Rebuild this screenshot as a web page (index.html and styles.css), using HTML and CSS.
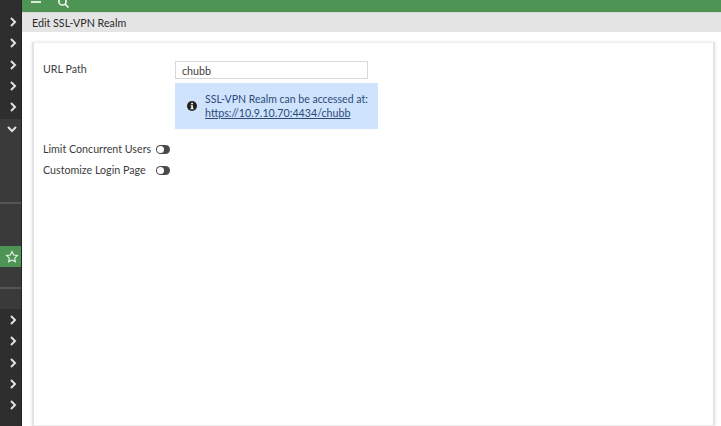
FILE: index.html
```html
<!DOCTYPE html>
<html lang="en">
<head>
<meta charset="utf-8">
<title>Edit SSL-VPN Realm</title>
<link rel="stylesheet" href="styles.css">
</head>
<body>
<div class="app">
  <nav class="side">
    <div class="nav-top">
      <svg class="chev" viewBox="0 0 8 10"><path d="M2 1l4 4-4 4"/></svg>
      <svg class="chev" viewBox="0 0 8 10"><path d="M2 1l4 4-4 4"/></svg>
      <svg class="chev" viewBox="0 0 8 10"><path d="M2 1l4 4-4 4"/></svg>
      <svg class="chev" viewBox="0 0 8 10"><path d="M2 1l4 4-4 4"/></svg>
      <svg class="chev" viewBox="0 0 8 10"><path d="M2 1l4 4-4 4"/></svg>
    </div>
    <div class="nav-open">
      <svg class="chev-down" viewBox="0 0 10 8"><path d="M1 2l4 4 4-4"/></svg>
      <div class="sep sep-a"></div>
      <div class="fav">
        <svg class="star" viewBox="0 0 14 14"><path d="M7 1.6l1.65 3.4 3.75.5-2.72 2.6.66 3.7L7 10l-3.34 1.8.66-3.7L1.6 5.5l3.75-.5z"/></svg>
      </div>
      <div class="sep sep-b"></div>
    </div>
    <div class="nav-bottom">
      <svg class="chev" viewBox="0 0 8 10"><path d="M2 1l4 4-4 4"/></svg>
      <svg class="chev" viewBox="0 0 8 10"><path d="M2 1l4 4-4 4"/></svg>
      <svg class="chev" viewBox="0 0 8 10"><path d="M2 1l4 4-4 4"/></svg>
      <div class="alert-row">
        <span class="red"></span>
        <svg class="chev" viewBox="0 0 8 10"><path d="M2 1l4 4-4 4"/></svg>
      </div>
      <svg class="chev" viewBox="0 0 8 10"><path d="M2 1l4 4-4 4"/></svg>
    </div>
  </nav>
  <main class="main">
    <header class="topbar">
      <svg class="menu" viewBox="0 0 10 6"><path d="M0 2h10"/></svg>
      <svg class="search" viewBox="0 0 11 9"><circle cx="4.5" cy="1.5" r="3.6"/><path d="M7 4l3.5 3.5"/></svg>
    </header>
    <div class="title">Edit SSL-VPN Realm</div>
    <section class="card">
      <div class="row-url">
        <label class="lbl lbl-url">URL Path</label>
        <div class="field">
          <input class="input" type="text" value="chubb">
          <div class="info">
            <svg class="info-icon" viewBox="0 0 10 10"><circle cx="5" cy="5" r="5" fill="#222"/><rect x="4.2" y="1.7" width="1.7" height="1.6" fill="#fff"/><path d="M3.7 4.2h2.2v3h.7v1H3.5v-1h.8v-2h-.6z" fill="#fff"/></svg>
            <div class="info-text">
              <div>SSL-VPN Realm can be accessed at:</div>
              <a class="link" href="#">https://10.9.10.70:4434/chubb</a>
            </div>
          </div>
        </div>
      </div>
      <div class="row-toggle">
        <span class="lbl lbl-toggle">Limit Concurrent Users</span>
        <span class="toggle"></span>
      </div>
      <div class="row-toggle row-login">
        <span class="lbl lbl-toggle">Customize Login Page</span>
        <span class="toggle"></span>
      </div>
    </section>
  </main>
</div>
</body>
</html>
```

FILE: styles.css
```css
* { box-sizing: border-box; }
html, body { margin: 0; height: 100%; overflow: hidden; background: #fff; }
body { font-family: Lato, "Liberation Sans", sans-serif; font-size: 10.7px; color: #3c3c3c; }

.app { display: flex; height: 426px; }

.side {
  width: 22px;
  flex: none;
  display: flex;
  flex-direction: column;
  background: #2e2e2e;
  border-right: 1px solid #242424;
}
.nav-top { display: flex; flex-direction: column; align-items: flex-end; height: 119px; padding: 17px 4px 0 0; gap: 11.25px; }
.nav-open { height: 190px; background: #3a3a3a; }
.nav-bottom { display: flex; flex-direction: column; align-items: flex-end; padding: 6px 4px 0 0; gap: 11.25px; }

.chev { width: 8px; height: 10px; flex: none; display: block; }
.chev path, .chev-down path { fill: none; stroke: #e2e2e2; stroke-width: 2; }
.chev-down { display: block; width: 10px; height: 8px; margin: 6px 0 0 7px; }

.sep { height: 2px; background: #555; }
.sep-a { margin-top: 69px; }
.sep-b { margin-top: 20px; }

.fav { height: 21px; margin-top: 42px; background: #4e9455; display: flex; align-items: center; justify-content: flex-end; padding-right: 2px; }
.star { width: 14px; height: 14px; }
.star path { fill: none; stroke: #eef5ee; stroke-width: 1.1; }

.alert-row { position: relative; }
.red { position: absolute; left: -18px; top: 1px; width: 3px; height: 8px; border-radius: 0 2px 2px 0; background: #e0281e; }

.main { flex: 1; display: flex; flex-direction: column; min-width: 0; }

.topbar { height: 13px; flex: none; background: #4e9455; display: flex; align-items: flex-start; padding-left: 9px; gap: 17px; border-bottom: 1px solid #d8d8d8; }
.menu { width: 10px; height: 6px; flex: none; }
.menu path { stroke: #fff; stroke-width: 1.6; fill: none; }
.search { width: 11px; height: 9px; flex: none; }
.search circle, .search path { stroke: #fff; stroke-width: 1.5; fill: none; }

.title { height: 19px; flex: none; padding: 0 10px; line-height: 19px; font-size: 10.7px; color: #2a2a2a; background: #e4e4e4; }

.card {
  flex: 1;
  margin: 10px 6px 0 10px;
  padding: 18px 9px 0;
  background: #fff;
  border: 1px solid #eee;
  border-left: 2px solid #e4e4e4;
  border-right: 2px solid #e4e4e4;
  box-shadow: 0 0 3px rgba(0, 0, 0, .12);
}

.lbl { font-size: 10.7px; line-height: 14px; color: #3c3c3c; white-space: nowrap; }
.lbl-url { width: 132px; flex: none; margin-top: 1px; }
.lbl-toggle { width: 113px; flex: none; }

.row-url { display: flex; align-items: flex-start; }
.field { width: 203px; }
.input {
  display: block;
  width: 193px;
  height: 18px;
  padding: 0 6px;
  font: 10.7px Lato, "Liberation Sans", sans-serif;
  color: #3c3c3c;
  background: #fff;
  border: 1px solid #d8d8d8;
  outline: none;
}
.info {
  height: 46px;
  margin-top: 4px;
  padding-left: 12px;
  display: flex;
  align-items: center;
  gap: 8px;
  background: #cfe3fd;
}
.info-icon { width: 10px; height: 10px; flex: none; }
.info-text { font-size: 10.5px; line-height: 14px; color: #2b4a78; white-space: nowrap; }
.link { font-size: 10.7px; color: #2b4a78; text-decoration: underline; }

.row-toggle { display: flex; align-items: center; height: 14px; margin-top: 13px; }
.row-login { margin-top: 7px; }
.toggle { position: relative; width: 14px; height: 9px; border-radius: 4.5px; background: #4a4a4a; flex: none; }
.toggle::before { content: ""; position: absolute; left: 1px; top: 1px; width: 7px; height: 7px; border-radius: 50%; background: #fff; }
```
